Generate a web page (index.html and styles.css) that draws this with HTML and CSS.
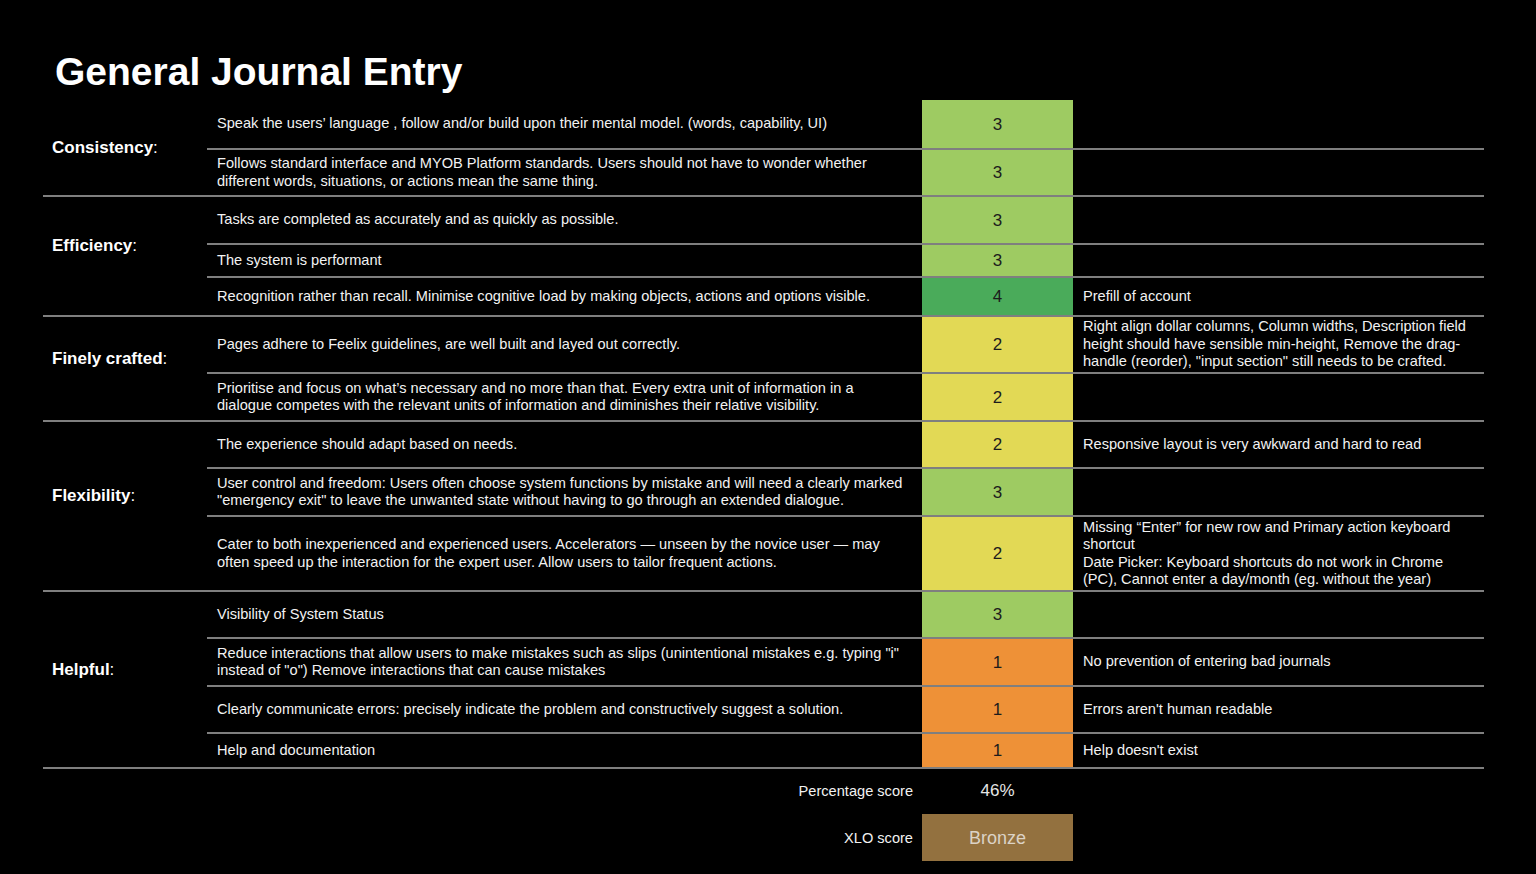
FILE: index.html
```html
<!DOCTYPE html>
<html lang="en">
<head>
<meta charset="utf-8">
<title>General Journal Entry</title>
<link rel="stylesheet" href="styles.css">
</head>
<body>
<main class="page">
  <h1 class="title">General Journal Entry</h1>
  <div class="table">
    <section class="group">
      <div class="group-label"><b>Consistency</b>:</div>
      <div class="rows">
        <div class="row h48"><div class="desc">Speak the users’ language , follow and/or build upon their mental model. (words, capability, UI)</div><div class="score s-green">3</div><div class="note"></div></div>
        <div class="row h47"><div class="desc">Follows standard interface and MYOB Platform standards. Users should not have to wonder whether<br>different words, situations, or actions mean the same thing.</div><div class="score s-green">3</div><div class="note"></div></div>
      </div>
    </section>
    <section class="group">
      <div class="group-label group-label--up"><b>Efficiency</b>:</div>
      <div class="rows">
        <div class="row h46"><div class="desc">Tasks are completed as accurately and as quickly as possible.</div><div class="score s-green">3</div><div class="note"></div></div>
        <div class="row h33"><div class="desc">The system is performant</div><div class="score s-green">3</div><div class="note"></div></div>
        <div class="row h39"><div class="desc">Recognition rather than recall. Minimise cognitive load by making objects, actions and options visible.</div><div class="score s-dark">4</div><div class="note">Prefill of account</div></div>
      </div>
    </section>
    <section class="group">
      <div class="group-label group-label--up"><b>Finely crafted</b>:</div>
      <div class="rows">
        <div class="row h55"><div class="desc">Pages adhere to Feelix guidelines, are well built and layed out correctly.</div><div class="score s-yellow">2</div><div class="note">Right align dollar columns, Column widths, Description field<br>height should have sensible min-height, Remove the drag-<br>handle (reorder), "input section" still needs to be crafted.</div></div>
        <div class="row h48"><div class="desc">Prioritise and focus on what’s necessary and no more than that. Every extra unit of information in a<br>dialogue competes with the relevant units of information and diminishes their relative visibility.</div><div class="score s-yellow">2</div><div class="note"></div></div>
      </div>
    </section>
    <section class="group">
      <div class="group-label group-label--up"><b>Flexibility</b>:</div>
      <div class="rows">
        <div class="row h45"><div class="desc">The experience should adapt based on needs.</div><div class="score s-yellow">2</div><div class="note">Responsive layout is very awkward and hard to read</div></div>
        <div class="row h48"><div class="desc">User control and freedom: Users often choose system functions by mistake and will need a clearly marked<br>"emergency exit" to leave the unwanted state without having to go through an extended dialogue.</div><div class="score s-green">3</div><div class="note"></div></div>
        <div class="row h75"><div class="desc">Cater to both inexperienced and experienced users. Accelerators — unseen by the novice user — may<br>often speed up the interaction for the expert user. Allow users to tailor frequent actions.</div><div class="score s-yellow">2</div><div class="note">Missing “Enter” for new row and Primary action keyboard<br>shortcut<br>Date Picker: Keyboard shortcuts do not work in Chrome<br>(PC), Cannot enter a day/month (eg. without the year)</div></div>
      </div>
    </section>
    <section class="group">
      <div class="group-label group-label--up"><b>Helpful</b>:</div>
      <div class="rows">
        <div class="row h45"><div class="desc">Visibility of System Status</div><div class="score s-green">3</div><div class="note"></div></div>
        <div class="row h48"><div class="desc">Reduce interactions that allow users to make mistakes such as slips (unintentional mistakes e.g. typing "i"<br>instead of "o") Remove interactions that can cause mistakes</div><div class="score s-orange">1</div><div class="note">No prevention of entering bad journals</div></div>
        <div class="row h47"><div class="desc">Clearly communicate errors: precisely indicate the problem and constructively suggest a solution.</div><div class="score s-orange">1</div><div class="note">Errors aren't human readable</div></div>
        <div class="row h35"><div class="desc">Help and documentation</div><div class="score s-orange">1</div><div class="note">Help doesn't exist</div></div>
      </div>
    </section>
  </div>
  <div class="summary">
    <div class="sum-label sum-pct">Percentage score</div>
    <div class="sum-value sum-pct">46%</div>
    <div class="sum-label sum-xlo">XLO score</div>
    <div class="sum-value sum-xlo bronze">Bronze</div>
  </div>
</main>
</body>
</html>
```

FILE: styles.css
```css
html, body {
  margin: 0;
  padding: 0;
  background: #000;
}
body {
  font-family: "Liberation Sans", Arial, Helvetica, sans-serif;
  color: #f2f2f2;
  width: 1536px;
  height: 874px;
  overflow: hidden;
}
.page {
  padding: 52px 0 0 43px;
}
.title {
  margin: 0 0 9px 12px;
  font-size: 39px;
  line-height: 39px;
  font-weight: bold;
  color: #fff;
  letter-spacing: 0;
}
.table {
  width: 1441px;
}
.group {
  display: grid;
  grid-template-columns: 164px 1277px;
  border-bottom: 2px solid #7f7f7f;
}
.group-label {
  display: flex;
  align-items: center;
  padding-left: 9px;
  font-size: 17px;
  color: #fff;
}
.group-label b {
  font-weight: bold;
}
.group-label--up {
  padding-bottom: 20px;
}
.rows {
  display: flex;
  flex-direction: column;
}
.row {
  display: grid;
  grid-template-columns: 715px 151px 411px;
  box-sizing: border-box;
}
.row + .row {
  border-top: 2px solid #7f7f7f;
}
.h33 { height: 33px; }
.h35 { height: 35px; }
.h39 { height: 39px; }
.h45 { height: 45px; }
.h46 { height: 46px; }
.h47 { height: 47px; }
.h48 { height: 48px; }
.h55 { height: 55px; }
.h75 { height: 75px; }
.desc, .note {
  display: flex;
  align-items: center;
  padding: 0 4px 0 10px;
  font-size: 14.6px;
  line-height: 17.5px;
  color: #f2f2f2;
  white-space: nowrap;
}
.score {
  display: flex;
  align-items: center;
  justify-content: center;
  font-size: 17px;
  color: #1c1c1c;
  padding-top: 1px;
}
.s-green { background: #9ecb62; }
.s-dark { background: #4aab5a; }
.s-yellow { background: #e2d955; }
.s-orange { background: #ee9137; }
.summary {
  display: grid;
  grid-template-columns: 879px 151px;
  grid-template-rows: 45px 47px;
}
.sum-label {
  display: flex;
  align-items: center;
  justify-content: flex-end;
  padding-right: 9px;
  font-size: 14.6px;
  color: #f2f2f2;
}
.sum-value {
  display: flex;
  align-items: center;
  justify-content: center;
  font-size: 17px;
  color: #e6e6e6;
}
.sum-pct {
  padding-bottom: 2px;
}
.bronze {
  background: #93713f;
  font-size: 18px;
  color: #dcd3c6;
  padding-top: 2px;
}
```
